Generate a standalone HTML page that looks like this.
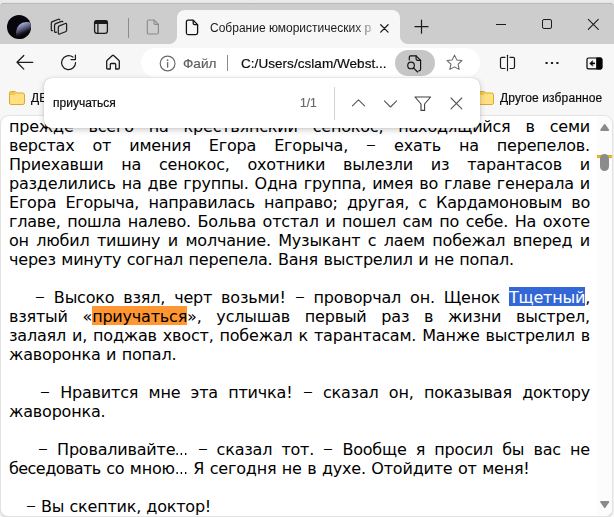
<!DOCTYPE html>
<html lang="ru">
<head>
<meta charset="utf-8">
<title>Собрание юмористических рассказов</title>
<style>
html,body{margin:0;padding:0;}
body{width:614px;height:517px;overflow:hidden;position:relative;background:#f7f7f7;font-family:"Liberation Sans",sans-serif;color:#1b1b1b;}
.abs{position:absolute;}
#topstrip{left:0;top:0;width:614px;height:3px;background:linear-gradient(#ebebeb,#e6e6e6);}
#tabbar{left:0;top:3px;width:614px;height:40.5px;background:#cdcdcd;border-top:1px solid #b9b9b9;box-sizing:border-box;border-radius:3px 3px 0 0;}
#tab{left:177px;top:10px;width:223px;height:33.5px;background:#f7f7f7;border-radius:8px 8px 0 0;}
#tab:before,#tab:after{content:"";position:absolute;bottom:0;width:8px;height:8px;}
#tab:before{left:-8px;background:radial-gradient(circle at 0 0,rgba(247,247,247,0) 7.5px,#f7f7f7 8.5px);}
#tab:after{right:-8px;background:radial-gradient(circle at 100% 0,rgba(247,247,247,0) 7.5px,#f7f7f7 8.5px);}
#tabtitle{left:210px;top:20px;width:161.6px;height:16px;font-size:12px;line-height:16px;white-space:nowrap;overflow:hidden;color:#1b1b1b;-webkit-mask-image:linear-gradient(90deg,#000 145px,transparent 169px);mask-image:linear-gradient(90deg,#000 145px,transparent 169px);}
#omni{left:141px;top:47.5px;width:339px;height:29px;background:#fff;border-radius:14.5px;}
#secchip{left:183px;top:55px;font-size:13.6px;line-height:18px;color:#5f5f5f;}
#sep1{left:227px;top:55px;width:1px;height:15.5px;background:#8a8a8a;}
#url{left:241px;top:55px;font-size:13.5px;line-height:18px;color:#0c0c0c;white-space:nowrap;letter-spacing:0.05px;}
#readchip{left:395px;top:50px;width:40px;height:25.7px;border-radius:13px;background:#c6c6c6;}
.bm{font-size:12px;line-height:16px;color:#0c0c0c;white-space:nowrap;}
.bm,#findtxt,#findcnt,#secchip,#url{will-change:transform;-webkit-text-stroke:0.2px;}
#find{left:43.5px;top:78px;width:436.5px;height:50.2px;background:#fff;border-radius:8px;box-shadow:0 2px 6px rgba(0,0,0,.2),0 0 1px rgba(0,0,0,.3);z-index:5;}
#findtxt{left:9px;top:17px;font-size:12px;line-height:16px;color:#0c0c0c;}
#findcnt{left:256px;top:17px;font-size:12px;line-height:16px;color:#6b6b6b;}
#findsep{left:290px;top:8.5px;width:1px;height:33px;background:#d2d2d2;}
#page{left:1px;top:116px;width:611px;height:399.6px;background:#fff;border-radius:8px 8px 7px 7px;overflow:hidden;box-shadow:0 0 0 1px #e3e3e3,0 1px 1.5px 0.5px #d6d6d6;}
#sbar{left:596px;top:0;width:15px;height:400px;background:#fcfcfc;}
#txt{left:8px;top:1px;width:581px;font-family:"DejaVu Sans","Liberation Sans",sans-serif;font-size:16px;line-height:19px;color:#000;letter-spacing:-0.2px;word-spacing:0.6px;}
#txt p{margin:0;height:19px;text-align:justify;text-align-last:justify;white-space:pre-wrap;}
#txt p.l{text-align-last:left;}
.d{display:inline-block;width:9.9px;transform:translateY(-0.5px) scale(1.24,.8);transform-origin:0 50%;letter-spacing:0;}
.el{display:inline-block;width:13px;transform:scaleX(.8);transform-origin:0 50%;letter-spacing:0;}
.hl{position:relative;z-index:0;}
.hl:before{content:"";position:absolute;left:0;right:0;top:-1px;height:19px;z-index:-1;}
.o:before{background:#ff9632;}
.s{color:#fff;}
.s:before{background:#3367d6;}
svg{position:absolute;overflow:visible;}
</style>
</head>
<body>
<div id="topstrip" class="abs"></div>
<div id="tabbar" class="abs"></div>
<div id="tab" class="abs"></div>
<div id="tabtitle" class="abs">Собрание юмористических рассказов</div>


<div id="omni" class="abs"></div>
<div id="readchip" class="abs"></div>
<!-- tab bar icons -->
<div class="abs" style="left:7.2px;top:14.8px;width:24px;height:24px;border-radius:50%;overflow:hidden;background:#06060c;">
  <div class="abs" style="left:9px;top:7.4px;width:21px;height:21px;border-radius:50%;background:linear-gradient(156deg,#eef3ff 0%,#c3d0ee 8%,#8e98bc 18%,#6b6d8e 28%,#45455f 37%,#17171f 46%,#06060c 54%);"></div>
</div>
<svg style="left:50px;top:18px" width="19" height="18" viewBox="0 0 19 18" fill="none" stroke="#1b1b1b" stroke-width="1.2" stroke-linejoin="round" stroke-linecap="round">
  <path d="M9.7 1.7 Q9.4 0.9 8.4 1.3 L2.5 3.6 Q1.3 4.1 1.3 5.2 L1.3 11.8 Q1.3 13 2.5 12.7"/>
  <path d="M12.8 3.8 Q12.5 3 11.5 3.4 L5.7 5.6 Q4.55 6.1 4.55 7.2 L4.55 13.3 Q4.55 14.6 5.8 14.3 L6.5 14.1"/>
  <path d="M8.3 9.4 Q8.3 8.3 9.4 7.9 L15.3 5.5 Q16.6 5 16.6 6.4 L16.6 12.3 Q16.6 13.4 15.5 13.8 L9.6 16 Q8.3 16.5 8.3 15.1 Z"/>
</svg>
<svg style="left:93px;top:19px" width="16" height="16" viewBox="0 0 16 16" fill="none" stroke="#1b1b1b" stroke-width="1.3">
  <rect x="1.6" y="1.6" width="12.8" height="12.8" rx="2.4"/>
  <path d="M1.6 4.4 Q1.6 1.6 4 1.6 L12 1.6 Q14.4 1.6 14.4 4.4 Z" fill="#1b1b1b"/>
  <path d="M4.9 4 L4.9 14.4"/>
</svg>
<div class="abs" style="left:128px;top:17.5px;width:1px;height:20px;background:#8c8c8c;"></div>
<svg style="left:146px;top:19px" width="14" height="16" viewBox="0 0 14 16" fill="none" stroke="#8a8a8a" stroke-width="1.1" stroke-linejoin="round">
  <path d="M2.9 1 L8 1 L12.4 5.4 L12.4 13.4 Q12.4 15 10.8 15 L2.9 15 Q1.3 15 1.3 13.4 L1.3 2.6 Q1.3 1 2.9 1 Z"/>
  <path d="M8 1 L8 4 Q8 5.4 9.4 5.4 L12.4 5.4"/>
</svg>
<svg style="left:185px;top:18.5px" width="14" height="17" viewBox="0 0 14 17" fill="none" stroke="#111" stroke-width="1.3" stroke-linejoin="round">
  <path d="M3.2 1.2 L8.2 1.2 L12.6 5.6 L12.6 13.8 Q12.6 15.6 10.8 15.6 L3.2 15.6 Q1.4 15.6 1.4 13.8 L1.4 3 Q1.4 1.2 3.2 1.2 Z"/>
  <path d="M8.2 1.2 L8.2 4.2 Q8.2 5.6 9.6 5.6 L12.6 5.6"/>
</svg>
<svg style="left:380px;top:23.5px" width="9" height="9" viewBox="0 0 9 9" fill="none" stroke="#1b1b1b" stroke-width="1.25" stroke-linecap="round">
  <path d="M0.7 0.7 L8.1 8.1 M8.1 0.7 L0.7 8.1"/>
</svg>
<svg style="left:414px;top:19px" width="15" height="15" viewBox="0 0 15 15" fill="none" stroke="#1b1b1b" stroke-width="1.2" stroke-linecap="round">
  <path d="M7.5 1.2 L7.5 14.2 M1 7.7 L14 7.7"/>
</svg>
<!-- window controls -->
<div class="abs" style="left:496px;top:23.6px;width:10.3px;height:1.1px;background:#1b1b1b;"></div>
<div class="abs" style="left:541.7px;top:18.8px;width:10.4px;height:10.4px;border:1.1px solid #1b1b1b;border-radius:2px;box-sizing:border-box;"></div>
<svg style="left:588px;top:18.8px" width="11" height="11" viewBox="0 0 11 11" fill="none" stroke="#1b1b1b" stroke-width="1.1" stroke-linecap="round">
  <path d="M0.3 0.3 L10.3 10.3 M10.3 0.3 L0.3 10.3"/>
</svg>

<!-- toolbar icons -->
<svg style="left:16px;top:54px" width="18" height="17" viewBox="0 0 18 17" fill="none" stroke="#1b1b1b" stroke-width="1.25" stroke-linecap="round" stroke-linejoin="round">
  <path d="M1 8.3 L16.8 8.3 M7.8 1.5 L1 8.3 L7.8 15.1"/>
</svg>
<svg style="left:60px;top:54px" width="18" height="18" viewBox="0 0 18 18" fill="none" stroke="#1b1b1b" stroke-width="1.25" stroke-linecap="round" stroke-linejoin="round">
  <path d="M15.6 8.6 A7 7 0 1 1 12.9 3.1"/>
  <path d="M15.4 1.2 L15.4 5.6 L11 5.6" />
</svg>
<svg style="left:105px;top:54px" width="16" height="17" viewBox="0 0 16 17" fill="none" stroke="#1b1b1b" stroke-width="1.3" stroke-linejoin="round">
  <path d="M1.7 7.2 Q1.7 6.6 2.2 6.2 L7.4 1.5 Q8 1 8.6 1.5 L13.8 6.2 Q14.3 6.6 14.3 7.2 L14.3 13.9 Q14.3 15 13.2 15 L10.7 15 L10.7 10.6 Q10.7 9.5 9.6 9.5 L6.4 9.5 Q5.3 9.5 5.3 10.6 L5.3 15 L2.8 15 Q1.7 15 1.7 13.9 Z"/>
</svg>
<svg style="left:158.5px;top:54.5px" width="17" height="17" viewBox="0 0 17 17" fill="none" stroke="#6a6a6a" stroke-width="1.15">
  <circle cx="8.6" cy="8.5" r="7.4"/>
  <path d="M8.6 7.6 L8.6 12.2" stroke-width="1.3" stroke-linecap="round"/>
  <circle cx="8.6" cy="5.2" r="0.85" fill="#6a6a6a" stroke="none"/>
</svg>
<svg style="left:406px;top:54.5px" width="17" height="19" viewBox="0 0 17 19" fill="none" stroke="#111" stroke-width="1.15" stroke-linejoin="round" stroke-linecap="round">
  <path d="M3.3 5 L3.3 2 Q3.3 0.8 4.5 0.8 L10.1 0.8 L14.6 5.3 L14.6 14.3 Q14.6 15.8 13.1 15.8 L12.7 15.8"/>
  <path d="M10.1 0.8 L10.1 4.1 Q10.1 5.3 11.3 5.3 L14.6 5.3"/>
  <circle cx="5.05" cy="10.4" r="3.3"/>
  <path d="M7.4 12.8 L11.6 17"/>
</svg>
<svg style="left:446.1px;top:54.3px" width="17" height="17" viewBox="0 0 17 17" fill="none" stroke="#676767" stroke-width="1.05" stroke-linejoin="round">
  <path d="M8.5 1.1 L10.75 5.9 L15.9 6.6 L12.1 10.2 L13.1 15.4 L8.5 12.85 L3.9 15.4 L4.9 10.2 L1.1 6.6 L6.25 5.9 Z"/>
</svg>
<svg style="left:499px;top:54px" width="17" height="18" viewBox="0 0 17 18" fill="none" stroke="#1b1b1b" stroke-width="1.2" stroke-linecap="round">
  <path d="M6 3.3 L2.9 3.3 Q1.5 3.3 1.5 4.7 L1.5 13.1 Q1.5 14.5 2.9 14.5 L6 14.5"/>
  <path d="M11 3.3 L14.1 3.3 Q15.5 3.3 15.5 4.7 L15.5 13.1 Q15.5 14.5 14.1 14.5 L11 14.5"/>
  <path d="M8.5 1.2 L8.5 16.6" stroke-width="1.1"/>
</svg>
<svg style="left:545px;top:61px" width="15" height="4" viewBox="0 0 15 4" fill="#1b1b1b">
  <rect x="0.5" y="0.9" width="2.2" height="2.2" rx="0.6"/><rect x="5.9" y="0.9" width="2.2" height="2.2" rx="0.6"/><rect x="11.3" y="0.9" width="2.2" height="2.2" rx="0.6"/>
</svg>
<svg style="left:585.5px;top:56.6px" width="17" height="13" viewBox="0 0 17 13" fill="none" stroke="#000" stroke-width="1.2" stroke-linejoin="round" stroke-linecap="round">
  <rect x="1" y="1" width="14.8" height="10.8" rx="1.4"/>
  <path d="M10.8 1 L14.4 1 Q15.8 1 15.8 2.4 L15.8 10.4 Q15.8 11.8 14.4 11.8 L10.8 11.8 Z" fill="#000"/>
  <path d="M9 6.4 L6 6.4" stroke-width="1.5" stroke-linecap="butt"/>
  <path d="M6.4 4 L3.7 6.4 L6.4 8.8 Z" fill="#000" stroke-width="0.6"/>
</svg>

<!-- bookmark folders -->
<svg style="left:9px;top:91px" width="16" height="14" viewBox="0 0 16 14">
  <path d="M0.5 2.2 Q0.5 0.5 2.2 0.5 L5.6 0.5 Q6.4 0.5 6.9 1 L7.9 2 L13.8 2 Q15.5 2 15.5 3.7 L15.5 11.8 Q15.5 13.5 13.8 13.5 L2.2 13.5 Q0.5 13.5 0.5 11.8 Z" fill="#ffe083" stroke="#d9a92a" stroke-width="1"/>
  <path d="M0.9 4.2 L0.9 2.3 Q0.9 0.9 2.3 0.9 L5.5 0.9 Q6.2 0.9 6.7 1.4 L7.2 2 L6 3.4 Q5.5 3.9 4.8 3.9 L1.2 3.9 Z" fill="#f7c647"/>
</svg>
<svg style="left:478px;top:91px" width="16" height="14" viewBox="0 0 16 14">
  <path d="M0.5 2.2 Q0.5 0.5 2.2 0.5 L5.6 0.5 Q6.4 0.5 6.9 1 L7.9 2 L13.8 2 Q15.5 2 15.5 3.7 L15.5 11.8 Q15.5 13.5 13.8 13.5 L2.2 13.5 Q0.5 13.5 0.5 11.8 Z" fill="#ffe083" stroke="#d9a92a" stroke-width="1"/>
  <path d="M0.9 4.2 L0.9 2.3 Q0.9 0.9 2.3 0.9 L5.5 0.9 Q6.2 0.9 6.7 1.4 L7.2 2 L6 3.4 Q5.5 3.9 4.8 3.9 L1.2 3.9 Z" fill="#f7c647"/>
</svg>

<!-- toolbar -->
<div id="secchip" class="abs">Файл</div>
<div id="sep1" class="abs"></div>
<div id="url" class="abs">C:/Users/cslam/Webst...</div>

<!-- bookmarks -->
<div class="abs bm" style="left:31px;top:90px;">ДЕ</div>
<div class="abs bm" style="left:500px;top:90px;letter-spacing:0.12px;">Другое избранное</div>

<!-- find bar -->
<div id="find" class="abs">
  <div id="findtxt" class="abs">приучаться</div>
  <div id="findcnt" class="abs">1/1</div>
  <div id="findsep" class="abs"></div>

  <svg style="left:307px;top:20px" width="16" height="10" viewBox="0 0 16 10" fill="none" stroke="#585858" stroke-width="1.1" stroke-linecap="round" stroke-linejoin="round"><path d="M1.4 7.9 L7.5 1.8 L13.6 7.9"/></svg>
  <svg style="left:339px;top:21px" width="16" height="10" viewBox="0 0 16 10" fill="none" stroke="#585858" stroke-width="1.1" stroke-linecap="round" stroke-linejoin="round"><path d="M1.4 1.9 L7.5 8 L13.6 1.9"/></svg>
  <svg style="left:370.4px;top:17.5px" width="18" height="16" viewBox="0 0 18 16" fill="none" stroke="#3f3f3f" stroke-width="1.1" stroke-linejoin="round"><path d="M1 1 L16.6 1 L10.6 8 L10.6 14.4 L7 14.4 L7 8 Z"/></svg>
  <svg style="left:406px;top:18.6px" width="13" height="13" viewBox="0 0 13 13" fill="none" stroke="#585858" stroke-width="1.1" stroke-linecap="round"><path d="M1 1 L11.8 11.8 M11.8 1 L1 11.8"/></svg>
</div>

<!-- page -->
<div id="page" class="abs">
  <div id="sbar" class="abs">
    <div class="abs" style="left:0;top:38.6px;width:15px;height:3.4px;background:linear-gradient(#c9821e,#f7c21c 30%,#f7c21c 70%,#c9821e);"></div>
    <svg style="left:3px;top:7.5px" width="10" height="8" viewBox="0 0 10 8" fill="#8b8b8b"><path d="M3.9 0.5 Q4.7 -0.5 5.5 0.5 L9 5.6 Q9.8 7 8.2 7 L1.2 7 Q-0.4 7 0.4 5.6 Z"/></svg>
    <div class="abs" style="left:3.2px;top:38px;width:9px;height:17px;border-radius:4.5px;background:#8b8b8b;"></div>
    <svg style="left:3px;top:384px" width="10" height="8" viewBox="0 0 10 8" fill="#8b8b8b"><path d="M3.9 7.5 Q4.7 8.5 5.5 7.5 L9 2.4 Q9.8 1 8.2 1 L1.2 1 Q-0.4 1 0.4 2.4 Z"/></svg>
  </div>
  <div id="txt" class="abs">
<p>прежде всего на крестьянский сенокос, находящийся в семи</p>
<p>верстах от имения Егора Егорыча, <span class="d">–</span> ехать на перепелов.</p>
<p>Приехавши на сенокос, охотники вылезли из тарантасов и</p>
<p>разделились на две группы. Одна группа, имея во главе генерала и</p>
<p>Егора Егорыча, направилась направо; другая, с Кардамоновым во</p>
<p>главе, пошла налево. Больва отстал и пошел сам по себе. На охоте</p>
<p>он любил тишину и молчание. Музыкант с лаем побежал вперед и</p>
<p class="l">через минуту согнал перепела. Ваня выстрелил и не попал.</p>
<p class="l"> </p>
<p><span style="display:inline-block;width:26px"></span><span class="d">–</span> Высоко взял, черт возьми! <span class="d">–</span> проворчал он. Щенок <span class="hl s">Тщетный</span>,</p>
<p>взятый «<span class="hl o">приучаться</span>», услышав первый раз в жизни выстрел,</p>
<p>залаял и, поджав хвост, побежал к тарантасам. Манже выстрелил в</p>
<p class="l">жаворонка и попал.</p>
<p class="l"> </p>
<p><span style="display:inline-block;width:31px"></span><span class="d">–</span> Нравится мне эта птичка! <span class="d">–</span> сказал он, показывая доктору</p>
<p class="l">жаворонка.</p>
<p class="l"> </p>
<p><span style="display:inline-block;width:29px"></span><span class="d">–</span> Проваливайте<span class="el">…</span> <span class="d">–</span> сказал тот. <span class="d">–</span> Вообще я просил бы вас не</p>
<p class="l"><span style="letter-spacing:-.55px">беседовать</span> со мною<span class="el">…</span> Я сегодня не в духе. Отойдите от меня!</p>
<p class="l"> </p>
<p class="l" style="word-spacing:0.3px"><span style="display:inline-block;width:17px"></span><span class="d">–</span> Вы скептик, доктор!</p>
  </div>
</div>
</body>
</html>
